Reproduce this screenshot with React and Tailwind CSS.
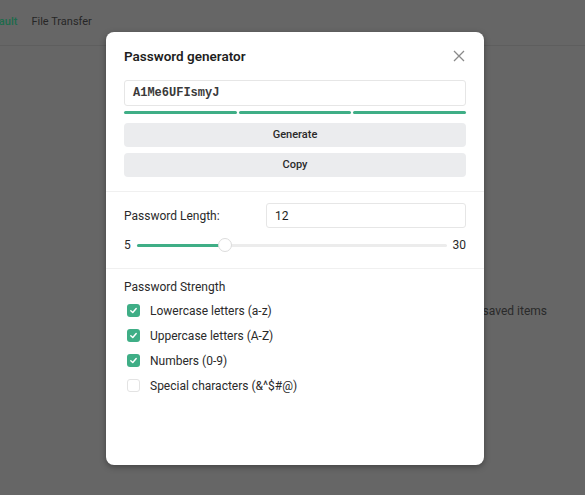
import React from "react";

const Check = ({ on }) =>
  on ? (
    <span className="w-[13px] h-[13px] rounded-[3px] bg-[#3fae86] flex items-center justify-center">
      <svg width="9" height="9" viewBox="0 0 10 10" fill="none">
        <path d="M2 5.2 L4.2 7.3 L8 2.8" stroke="white" strokeWidth="1.6" strokeLinecap="round" strokeLinejoin="round" />
      </svg>
    </span>
  ) : (
    <span className="w-[13px] h-[13px] rounded-[3px] border border-[#e3e3e3] bg-white" />
  );

export default function App() {
  const opts = [
    ["Lowercase letters (a-z)", true],
    ["Uppercase letters (A-Z)", true],
    ["Numbers (0-9)", true],
    ["Special characters (&^$#@)", false],
  ];
  return (
    <div className="relative w-[585px] h-[495px] overflow-hidden bg-[#666666] font-['Roboto',sans-serif]">
      <div className="h-[46px] border-b border-[#5e5e5e] flex items-start pt-[14px] gap-[14px] text-[11px] -ml-[8px]">
        <span className="text-[#1d6b4c] font-medium">Vault</span>
        <span className="text-[#262626]">File Transfer</span>
      </div>
      <div className="flex justify-end pr-[38px] pt-[256px] text-[12px] text-[#2a2a2a]">
        You have no saved items
      </div>

      <div className="absolute left-[106px] top-[32px] w-[378px] h-[433px] bg-white rounded-[8px] shadow-[0_2px_6px_rgba(0,0,0,0.35)] flex flex-col">
        <div className="px-[18px] pt-[16px]">
          <div className="flex items-center justify-between h-[16px]">
            <span className="text-[13.5px] font-semibold text-[#1e1e1e]">Password generator</span>
            <svg width="12" height="12" viewBox="0 0 12 12" className="mr-[1px]">
              <path d="M1 1 L11 11 M11 1 L1 11" stroke="#8a8a8a" strokeWidth="1.3" />
            </svg>
          </div>
          <div className="mt-[16px] h-[26px] border border-[#e6e6e6] rounded-[3px] flex items-center px-[8px] font-['Liberation_Mono',monospace] text-[12px] font-bold text-[#3a3a3a]">
            A1Me6UFIsmyJ
          </div>
          <div className="mt-[5px] flex gap-[2px]">
            <div className="flex-1 h-[3px] bg-[#3fae86] rounded-full" />
            <div className="flex-1 h-[3px] bg-[#3fae86] rounded-full" />
            <div className="flex-1 h-[3px] bg-[#3fae86] rounded-full" />
          </div>
          <div className="mt-[9px] flex flex-col gap-[6px]">
            <div className="h-[24px] rounded-[4px] bg-[#ebecee] flex items-center justify-center text-[11px] font-medium text-[#2a2a2a]">Generate</div>
            <div className="h-[24px] rounded-[4px] bg-[#ebecee] flex items-center justify-center text-[11px] font-medium text-[#2a2a2a]">Copy</div>
          </div>
        </div>
        <div className="mt-[14px] border-t border-[#f0f0f0]" />
        <div className="px-[18px] pt-[11px] pb-[15px]">
          <div className="flex items-center h-[25px]">
            <span className="w-[142px] text-[12px] text-[#2a2a2a]">Password Length:</span>
            <div className="flex-1 h-[25px] border border-[#e6e6e6] rounded-[3px] flex items-center px-[8px] text-[12px] text-[#1e1e1e]">12</div>
          </div>
          <div className="mt-[9px] flex items-center h-[16px] text-[12px] text-[#2a2a2a]">
            <span className="w-[13px]">5</span>
            <div className="relative flex-1 h-[3px] bg-[#ececec] rounded-full mr-[6px]">
              <div className="absolute left-0 top-0 h-[3px] w-[86px] bg-[#3fae86] rounded-full" />
              <div className="absolute left-[81px] -top-[5.5px] w-[14px] h-[14px] rounded-full bg-white border border-[#dcdcdc]" />
            </div>
            <span>30</span>
          </div>
        </div>
        <div className="border-t border-[#f0f0f0]" />
        <div className="px-[18px] pt-[10px]">
          <div className="text-[12px] text-[#2a2a2a] h-[16px] leading-[16px]">Password Strength</div>
          <div className="mt-[3px] flex flex-col">
            {opts.map(([t, on]) => (
              <div key={t} className="h-[25px] flex items-center gap-[10px] pl-[3px]">
                <Check on={on} />
                <span className="text-[12px] text-[#2a2a2a]">{t}</span>
              </div>
            ))}
          </div>
        </div>
      </div>
    </div>
  );
}
